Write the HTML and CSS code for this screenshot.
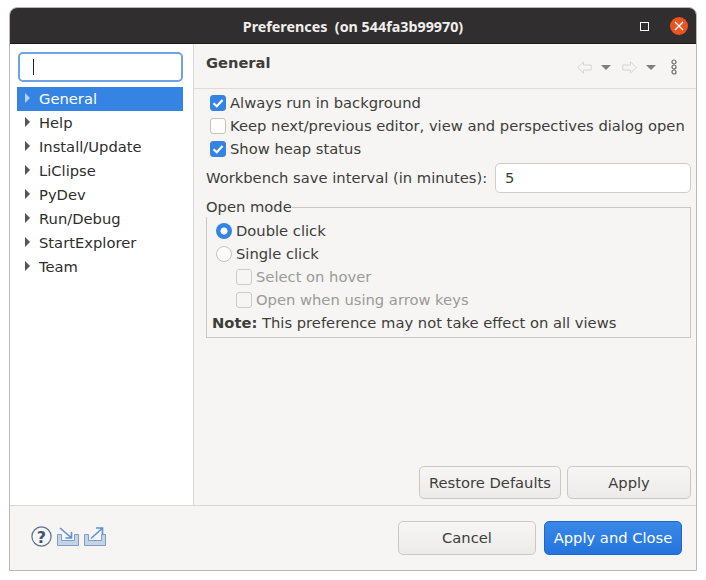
FILE: index.html
```html
<!DOCTYPE html>
<html lang="en">
<head>
    <meta charset="UTF-8" />
    <title>Preferences</title>
    <link rel="stylesheet" href="styles.css">
</head>
<body>
<div class="window">
    <header class="titlebar">
        <span class="title">Preferences&nbsp; (on 544fa3b99970)</span>
        <span class="maximize"></span>
        <span class="close">
            <svg viewBox="0 0 10 10" width="10" height="10"><path d="M1 1 L9 9 M9 1 L1 9" stroke="#fff" stroke-width="1.4" fill="none"/></svg>
        </span>
    </header>

    <div class="main">
        <aside class="sidebar">
            <div class="search"><span class="caret"></span></div>
            <ul class="tree">
                <li class="selected"><i></i>General</li>
                <li><i></i>Help</li>
                <li><i></i>Install/Update</li>
                <li><i></i>LiClipse</li>
                <li><i></i>PyDev</li>
                <li><i></i>Run/Debug</li>
                <li><i></i>StartExplorer</li>
                <li><i></i>Team</li>
            </ul>
        </aside>

        <section class="content">
            <div class="content-head">
                <h1>General</h1>
                <div class="nav-icons">
                    <!-- Back / forward arrows -->
                    <svg class="arrow" viewBox="0 0 15 13" width="15" height="13"><path d="M0.8 6.5 L6.5 0.8 V4 H14.2 V9 H6.5 V12.2 Z" fill="#f6f5f3" stroke="#d4d4d1"/></svg>
                    <span class="drop"></span>
                    <svg class="arrow fwd" viewBox="0 0 15 13" width="15" height="13"><path d="M14.2 6.5 L8.5 0.8 V4 H0.8 V9 H8.5 V12.2 Z" fill="#f6f5f3" stroke="#d4d4d1"/></svg>
                    <span class="drop"></span>
                    <svg class="kebab" viewBox="0 0 6 16" width="6" height="16"><circle cx="3" cy="3" r="2" fill="none" stroke="#6b6b68" stroke-width="1.2"/><circle cx="3" cy="8" r="2" fill="none" stroke="#6b6b68" stroke-width="1.2"/><circle cx="3" cy="13" r="2" fill="none" stroke="#6b6b68" stroke-width="1.2"/></svg>
                </div>
            </div>

            <div class="form">
                <div class="check-row"><span class="check on"><svg viewBox="0 0 16 16"><path d="M3.5 8.2 L6.8 11.2 L12.5 5" stroke="#fff" stroke-width="2.2" fill="none"/></svg></span>Always run in background</div>
                <div class="check-row"><span class="check"></span>Keep next/previous editor, view and perspectives dialog open</div>
                <div class="check-row"><span class="check on"><svg viewBox="0 0 16 16"><path d="M3.5 8.2 L6.8 11.2 L12.5 5" stroke="#fff" stroke-width="2.2" fill="none"/></svg></span>Show heap status</div>

                <div class="interval">
                    <label>Workbench save interval (in minutes):</label>
                    <div class="text-input">5</div>
                </div>

                <fieldset class="group">
                    <legend>Open mode</legend>
                    <div class="check-row"><span class="radio on"></span>Double click</div>
                    <div class="check-row"><span class="radio"></span>Single click</div>
                    <div class="check-row sub disabled"><span class="check"></span>Select on hover</div>
                    <div class="check-row sub disabled"><span class="check"></span>Open when using arrow keys</div>
                    <div class="note"><b>Note:</b> This preference may not take effect on all views</div>
                </fieldset>
            </div>

            <div class="page-buttons">
                <button class="btn restore" type="button">Restore Defaults</button>
                <button class="btn apply" type="button">Apply</button>
            </div>
        </section>
    </div>

    <footer class="footer">
        <div class="footer-icons">
            <svg class="help" viewBox="0 0 21 21" width="21" height="21"><circle cx="10.5" cy="10.5" r="9.6" fill="#f6f7fa" stroke="#5f6f8c" stroke-width="1.2"/><text x="10.5" y="16.5" text-anchor="middle" class="help-mark">?</text></svg>
            <svg viewBox="0 0 22 19" width="22" height="19"><path d="M0.5 7.5 H4.5 V13.5 H17.5 V7.5 H21.5 V18.5 H0.5 Z" fill="#c3d4e9" stroke="#7c9dc6"/><path d="M3 1 L14 10.5 M14.5 5 V11 H8.5" fill="none" stroke="#5b92cf" stroke-width="1.6"/></svg>
            <svg viewBox="0 0 22 19" width="22" height="19"><path d="M0.5 7.5 H4.5 V13.5 H17.5 V7.5 H21.5 V18.5 H0.5 Z" fill="#c3d4e9" stroke="#7c9dc6"/><path d="M7 11.5 L18 1.5 M12 1 H18.5 V7.5" fill="none" stroke="#5b92cf" stroke-width="1.6"/></svg>
        </div>
        <div class="footer-buttons">
            <button class="btn cancel" type="button">Cancel</button>
            <button class="btn primary" type="button">Apply and Close</button>
        </div>
    </footer>
</div>
</body>
</html>
```

FILE: styles.css
```css
html, body {
    margin: 0;
    height: 100%;
    background: #fff;
}
body {
    padding: 7px 9px 9px 9px;
    box-sizing: border-box;
    font-family: "DejaVu Sans", sans-serif;
    font-size: 14.73px;
    color: #3d3d3a;
}
.window {
    height: 100%;
    display: flex;
    flex-direction: column;
    background: #f6f5f3;
    border: 1px solid #b9b9b6;
    border-radius: 8px 8px 0 0;
    box-sizing: border-box;
}
.titlebar {
    height: 36px;
    flex: none;
    position: relative;
    display: flex;
    align-items: center;
    justify-content: center;
    padding-top: 2px;
    background: #302e2e;
    box-sizing: border-box;
    border-radius: 7px 7px 0 0;
    border-bottom: 1px solid #1e1d1d;
}
.title {
    font-family: "Noto Sans", sans-serif;
    font-weight: bold;
    font-size: 14.3px;
    color: #f0efed;
}
.maximize {
    position: absolute;
    right: 47px;
    top: 14px;
    width: 7px;
    height: 7px;
    border: 1px solid #fff;
}
.close {
    position: absolute;
    right: 8px;
    top: 9px;
    width: 18px;
    height: 18px;
    border-radius: 50%;
    background: #e95420;
    display: flex;
    align-items: center;
    justify-content: center;
}
.main {
    flex: 1;
    display: flex;
    min-height: 0;
    border-bottom: 1px solid #d9d8d6;
}
.sidebar {
    width: 184px;
    flex: none;
    background: #fff;
    border-right: 1px solid #d9d8d6;
    padding: 8px 10px 0 7px;
    box-sizing: border-box;
}
.search {
    height: 30px;
    margin-left: 1px;
    background: #fff;
    border: 2px solid #6ea3e4;
    border-radius: 5px;
    box-sizing: border-box;
    display: flex;
    align-items: center;
    padding-left: 13px;
}
.caret {
    width: 1px;
    height: 16px;
    background: #222;
}
.tree {
    list-style: none;
    margin: 5px 0 0;
    padding: 0;
}
.tree li {
    height: 24px;
    box-sizing: border-box;
    padding-bottom: 2px;
    display: flex;
    align-items: center;
    color: #2e2e2c;
}
.tree i {
    width: 0;
    height: 0;
    margin: 0 9px 0 8px;
    border-left: 5px solid #555;
    border-top: 5px solid transparent;
    border-bottom: 5px solid transparent;
}
.tree li.selected {
    background: #3584e4;
    color: #fff;
}
.tree li.selected i {
    border-left-color: #b5d2f5;
}
.content {
    flex: 1;
    min-width: 0;
    display: flex;
    flex-direction: column;
}
.content-head {
    height: 45px;
    flex: none;
    box-sizing: border-box;
    border-bottom: 1px solid #dddcda;
    display: flex;
    justify-content: space-between;
    padding: 10px 19px 0 12px;
}
.content-head h1 {
    margin: 0;
    font-size: 14.67px;
    line-height: 17px;
    font-weight: bold;
}
.nav-icons {
    display: flex;
    align-items: center;
    height: 24px;
    margin-top: 1px;
}
.drop {
    width: 0;
    height: 0;
    margin: 0 11px 0 9px;
    border-top: 5px solid #7d7f7c;
    border-left: 5px solid transparent;
    border-right: 5px solid transparent;
}
.kebab {
    margin-left: 4px;
}
.form {
    flex: 1;
    padding: 2px 5px 0 12px;
}
.check-row {
    height: 23px;
    display: flex;
    align-items: center;
    color: #3d3d3a;
    white-space: nowrap;
}
.check {
    width: 16px;
    height: 16px;
    margin: 0 4px;
    box-sizing: border-box;
    flex: none;
    background: #fdfdfc;
    border: 1px solid #c4c2bf;
    border-radius: 3px;
}
.check.on {
    background: #3584e4;
    border-color: #3584e4;
}
.check svg {
    display: block;
    width: 16px;
    height: 16px;
    margin: -1px;
}
.radio {
    width: 16px;
    height: 16px;
    margin-right: 4px;
    flex: none;
    box-sizing: border-box;
    border: 1px solid #c4c2bf;
    border-radius: 50%;
    background: #fdfdfc;
}
.radio.on {
    border: 0;
    background: radial-gradient(circle, #fff 3.2px, #3584e4 3.9px);
}
.interval {
    display: flex;
    align-items: center;
    justify-content: space-between;
    margin-top: 3px;
}
.interval label {
    padding-bottom: 2px;
}
.text-input {
    width: 196px;
    height: 30px;
    box-sizing: border-box;
    background: #fff;
    border: 1px solid #cfcdca;
    border-radius: 5px;
    padding: 0 9px;
    line-height: 28px;
}
.group {
    margin: 5px 0 0;
    padding: 2px 0 3px 9px;
    border: 1px solid #c9c8c5;
    min-width: 0;
}
.group legend {
    padding: 0 0 2px;
    margin-left: -10px;
    line-height: 17px;
}
.sub {
    padding-left: 16px;
}
.disabled {
    color: #9a9a97;
}
.disabled .check {
    margin-left: 4px;
    background: #f6f5f3;
    border-color: #cdcbc8;
}
.note {
    height: 23px;
    margin-left: -4px;
    line-height: 23px;
    white-space: nowrap;
}
.page-buttons {
    display: flex;
    justify-content: flex-end;
    gap: 6px;
    padding: 0 5px 6px 0;
}
.btn {
    font-family: "DejaVu Sans", sans-serif;
    font-size: 14.73px;
    color: #3d3d3a;
    height: 33px;
    padding: 0;
    border: 1px solid #cdc7c2;
    border-radius: 5px;
    background: linear-gradient(#f7f6f5, #edebe9);
}
.restore {
    width: 142px;
}
.apply {
    width: 124px;
}
.footer {
    height: 64px;
    flex: none;
    display: flex;
    align-items: flex-start;
    justify-content: space-between;
    padding: 15px 14px 0 21px;
    box-sizing: border-box;
}
.footer-icons {
    display: flex;
    align-items: center;
    gap: 5px;
    margin-top: 5px;
}
.help-mark {
    font-family: "DejaVu Sans", sans-serif;
    font-size: 16px;
    font-weight: bold;
    fill: #44536d;
}
.footer-buttons {
    display: flex;
    gap: 8px;
}
.footer .btn {
    width: 138px;
    height: 34px;
    padding-bottom: 2px;
}
.footer .primary {
    color: #fff;
    background: linear-gradient(#3a88e6, #2474de);
    border-color: #1b6acb;
}
```
